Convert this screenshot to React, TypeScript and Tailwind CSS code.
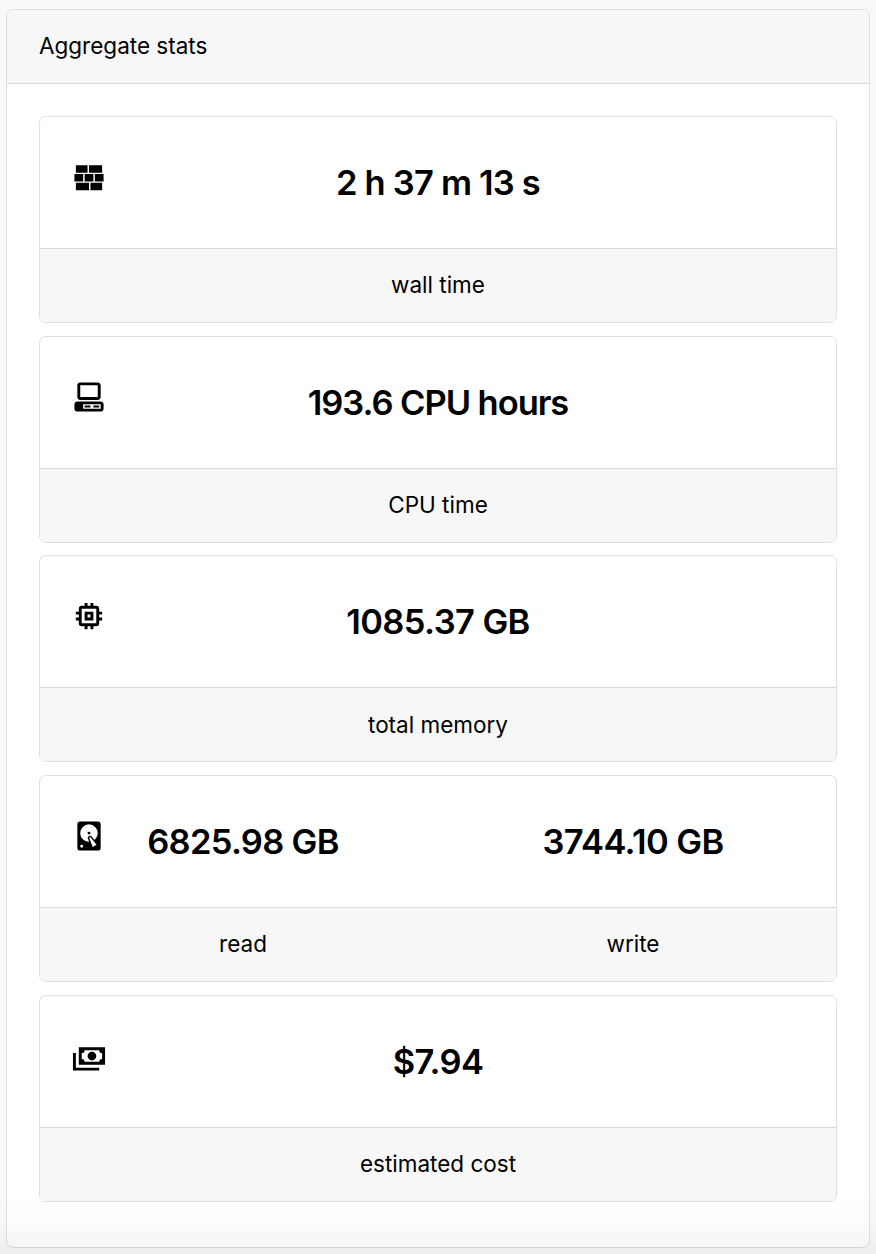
type Stat = { value: string; label: string; valueClass: string };
type Card = { icon: string; stats: Stat[] };

const cards: Card[] = [
  {
    icon: "M3,16H12V21H3V16M2,10H8V15H2V10M9,10H15V15H9V10M16,10H22V15H16V10M13,16H21V21H13V16M3,4H11V9H3V4M12,4H21V9H12V4Z",
    stats: [{ value: "2 h 37 m 13 s", label: "wall time", valueClass: "tracking-[-0.8px]" }],
  },
  {
    icon: "M6 2C4.89 2 4 2.89 4 4V12C4 13.11 4.89 14 6 14H18C19.11 14 20 13.11 20 12V4C20 2.89 19.11 2 18 2H6M6 4H18V12H6V4M4 15C2.89 15 2 15.89 2 17V20C2 21.11 2.89 22 4 22H20C21.11 22 22 21.11 22 20V17C22 15.89 21.11 15 20 15H4M8 17H20V20H8V17M9 17.75V19.25H13V17.75H9M15 17.75V19.25H19V17.75H15Z",
    stats: [{ value: "193.6 CPU hours", label: "CPU time", valueClass: "tracking-[-1.05px]" }],
  },
  {
    icon: "M17,17H7V7H17M21,11V9H19V7C19,5.89 18.1,5 17,5H15V3H13V5H11V3H9V5H7C5.89,5 5,5.89 5,7V9H3V11H5V13H3V15H5V17A2,2 0 0,0 7,19H9V21H11V19H13V21H15V19H17A2,2 0 0,0 19,17V15H21V13H19V11M13,13H11V11H13M15,9H9V15H15V9Z",
    stats: [{ value: "1085.37 GB", label: "total memory", valueClass: "tracking-[-0.6px]" }],
  },
  {
    icon: "M6,2H18A2,2 0 0,1 20,4V20A2,2 0 0,1 18,22H6A2,2 0 0,1 4,20V4A2,2 0 0,1 6,2M12,4A6,6 0 0,0 6,10C6,13.31 8.69,16 12.1,16L11.22,13.77C10.95,13.29 11.11,12.68 11.59,12.4L12.45,11.9C12.93,11.63 13.54,11.79 13.82,12.27L15.74,14.69C17.12,13.59 18,11.9 18,10A6,6 0 0,0 12,4M12,9A1,1 0 0,1 13,10A1,1 0 0,1 12,11A1,1 0 0,1 11,10A1,1 0 0,1 12,9M7,18A1,1 0 0,0 6,19A1,1 0 0,0 7,20A1,1 0 0,0 8,19A1,1 0 0,0 7,18M12.09,13.27L14.58,19.58L17.17,18.08L12.95,12.77L12.09,13.27Z",
    stats: [
      { value: "6825.98 GB", label: "read", valueClass: "tracking-[-0.7px]" },
      { value: "3744.10 GB", label: "write", valueClass: "tracking-[-0.6px]" },
    ],
  },
  {
    icon: "M5,6H23V18H5V6M14,9A3,3 0 0,1 17,12A3,3 0 0,1 14,15A3,3 0 0,1 11,12A3,3 0 0,1 14,9M9,8A2,2 0 0,1 7,10V14A2,2 0 0,1 9,16H19A2,2 0 0,1 21,14V10A2,2 0 0,1 19,8H9M1,10H3V20H19V22H1V10Z",
    stats: [{ value: "$7.94", label: "estimated cost", valueClass: "tracking-[-0.6px]" }],
  },
];

function StatCard({ icon, stats }: Card) {
  return (
    <section className="relative flex h-[206.9px] shrink-0 flex-col overflow-hidden rounded-[7px] border border-[#dfdfdf]">
      <svg viewBox="0 0 24 24" className="absolute top-[42px] left-[31px] size-[36px] p-[0.5px]" fill="currentColor" fillRule="evenodd">
        <path d={icon} />
      </svg>
      <div className="flex h-[132px] items-center border-b border-[#d9d9d9] px-2 pt-[0.5px] text-center text-[34.5px] font-[560]">
        {stats.map((s) => (
          <div key={s.label} className={`flex-1 ${s.valueClass}`}>{s.value}</div>
        ))}
      </div>
      <div className="flex flex-1 items-center bg-[#f7f7f7] px-2 pb-[0.6px] text-center text-[22.5px]">
        {stats.map((s) => (
          <div key={s.label} className="flex-1">{s.label}</div>
        ))}
      </div>
    </section>
  );
}

export default function App() {
  return (
    <div className="relative h-[1254px] w-[876px] bg-[#f8f9fb] pt-[9px] pr-[6px] pl-[6px] font-['Inter',sans-serif] text-black">
      <main className="h-[1239px] overflow-hidden rounded-[7px] border border-[#dcdddf] bg-white">
        <header className="flex h-[74px] items-center border-b border-[#d9d9d9] bg-[#f7f7f7] pb-[2px] pl-8 text-[22.5px]">
          Aggregate stats
        </header>
        <div className="flex flex-col gap-[12.8px] px-8 pt-8">
          {cards.map((c) => (
            <StatCard key={c.stats[0].label} {...c} />
          ))}
        </div>
      </main>
      <div className="pointer-events-none absolute inset-x-0 bottom-0 h-[64px] bg-linear-to-b from-black/0 via-black/1 to-black/5" />
    </div>
  );
}
